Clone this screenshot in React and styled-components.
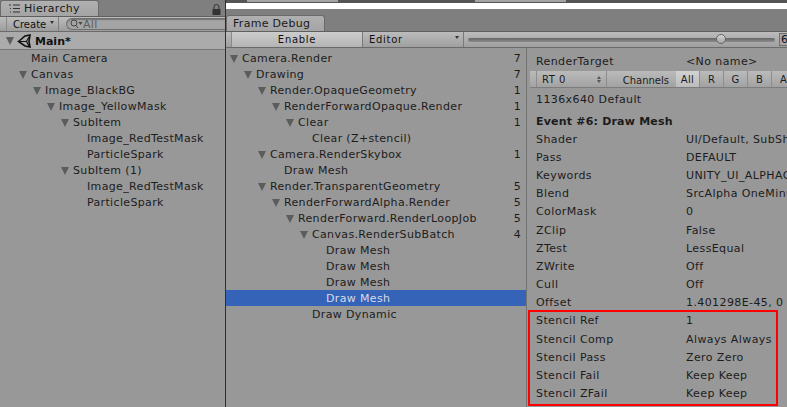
import React from "react";
import styled, { createGlobalStyle, css } from "styled-components";

const Global = createGlobalStyle`
  html, body { margin: 0; padding: 0; width: 787px; height: 407px; overflow: hidden; background: #989898; }
  * { box-sizing: border-box; }
`;
const Page = styled.div`
  width: 787px; height: 407px; display: flex; overflow: hidden; position: relative;
  font-family: "DejaVu Sans", sans-serif; font-size: 11px; color: #111; background: #989898;
`;
const Hierarchy = styled.section`
  width: 226px; flex: none; display: flex; flex-direction: column; border-right: 1px solid #2e2e2e;
`;
const TabStrip = styled.div`
  height: 16px; flex: none; background: #7f7f7f; display: flex; align-items: flex-end; justify-content: space-between;
`;
const Tab = styled.div`
  height: 16px; display: flex; align-items: center; gap: 4px; padding-left: ${p => p.$pad}px; width: ${p => p.$w}px;
  background: linear-gradient(#b0b0b0, #a4a4a4); border: 1px solid #6a6a6a; border-bottom: 0; border-radius: 3px 3px 0 0;
  letter-spacing: .3px; font-size: 11px; color: #1a1a1a;
`;
const Toolbar = styled.div`
  height: 16px; flex: none; display: flex; align-items: stretch; background: linear-gradient(#bdbdbd, #9c9c9c);
  border-top: 1px solid #5f5f5f; border-bottom: 1px solid #6a6a6a;
`;
const CreateBtn = styled.div`
  margin-left: 6px; width: 53px; padding: 1px 0 0 6px; display: flex; align-items: center; gap: 4px; font-size: 10px; letter-spacing: 0;
  border-left: 1px solid #8a8a8a; border-right: 1px solid #7d7d7d;
`;
const Caret = styled.span`
  width: 0; height: 0; border-left: 2.5px solid transparent; border-right: 2.5px solid transparent; border-top: 3px solid #333; margin-top: -4px;
`;
const Search = styled.div`
  flex: 1; margin: 1px 0 1px 7px; border: 1px solid #6f6f6f; border-right: 0; border-radius: 7px 0 0 7px; background: #a4a4a4;
  display: flex; align-items: center; padding-left: 3px; gap: 0; color: #5c5c5c; font-size: 11px; box-shadow: inset 0 1px 1px #777; letter-spacing: .3px;
`;
const SceneRow = styled.div`
  height: 18px; flex: none; display: flex; align-items: center; padding: 1px 0 0 6px; font-weight: bold; background: #ababab;
  border-bottom: 1px solid #787878; letter-spacing: 0; gap: 3px;
`;
const SceneArrow = styled.span`
  width: 0; height: 0; border-left: 4.5px solid transparent; border-right: 4.5px solid transparent; border-top: 8px solid #5c5c5c;
`;
const List = styled.div`
  flex: 1; padding-top: ${p => p.$top}px; display: flex; flex-direction: column;
`;
const Row = styled.div`
  height: 16px; flex: none; display: flex; align-items: center; white-space: nowrap; letter-spacing: .35px; line-height: 14px;
  padding: 2px 5px 0 ${p => p.$depth * 14 + p.$base}px; color: #1c1c1c;
  ${p => p.$selected && css`background: #3463b8; color: #d6dde9;`}
`;
const Arrow = styled.span`
  width: 14px; flex: none; display: flex; align-items: center; padding-left: 2px;
  &::before { content: ""; width: 0; height: 0; border-left: 4.5px solid transparent; border-right: 4.5px solid transparent; border-top: 8px solid #5c5c5c; ${p => !p.$open && "opacity:0;"} }
`;
const Count = styled.span`
  margin-left: auto;
`;
const LockIcon = styled.svg`
  width: 9px; height: 11px; margin: 0 4px 1px 0;
`;
const Main = styled.section`
  flex: 1; min-width: 0; display: flex; flex-direction: column; position: relative;
`;
const TopEdge = styled.div`
  height: 3px; flex: none; background: #555; display: flex; gap: 137px; padding-left: 21px;
`;
const TopTab = styled.div`
  width: 91px; height: 2px; background: #a4a4a4;
`;
const WhiteStrip = styled.div`
  height: 6px; flex: none; background: #fff;
`;
const DebugTabs = styled.div`
  height: 22px; flex: none; background: #7f7f7f; display: flex; align-items: flex-end;
`;
const DebugBar = styled(Toolbar)`
  height: 17px; background: linear-gradient(#bcbcbc, #9f9f9f); padding-left: 5px;
`;
const EnableBtn = styled.div`
  width: 132px; display: flex; align-items: center; justify-content: center; background: linear-gradient(#cdcdcd, #b4b4b4); font-size: 10px; letter-spacing: .7px;
  border-left: 1px solid #8a8a8a; border-right: 1px solid #7a7a7a;
`;
const EditorBtn = styled.div`
  width: 101px; padding: 0 4px 0 6px; display: flex; align-items: center; justify-content: space-between; font-size: 10px; letter-spacing: .7px;
  border-right: 1px solid #7a7a7a;
`;
const SliderWrap = styled.div`
  flex: 1; position: relative; display: flex; align-items: center; padding: 0 4px 0 4px;
`;
const Track = styled.div`
  flex: 1; height: 4px; border-radius: 2px; background: linear-gradient(#666, #8b8b8b);
`;
const Thumb = styled.div`
  position: absolute; right: 53px; top: 2px; width: 10px; height: 10px; border-radius: 50%; border: 1px solid #666; background: linear-gradient(#d5d5d5, #a5a5a5);
`;
const FrameField = styled.div`
  width: 8px; flex: none; background: #a8a8a8; border: 1px solid #6f6f6f; border-right: 0; font-size: 11px; overflow: hidden; margin: 1px 0; line-height: 12px; padding-left: 1px;
`;
const Split = styled.div`
  flex: 1; min-height: 0; display: flex; background: #989898;
`;
const TreePane = styled.div`
  width: 301px; flex: none; border-right: 1px solid #737373; display: flex; flex-direction: column;
`;
const Details = styled.div`
  flex: 1; min-width: 0; display: flex; flex-direction: column; position: relative; overflow: hidden; white-space: nowrap; letter-spacing: .4px; color: #1c1c1c;
`;
const TargetRow = styled.div`
  display: grid; grid-template-columns: 150px 1fr; padding: 6px 0 0 9px; height: 24px; line-height: 16px;
`;
const RtBar = styled.div`
  height: 17px; margin: -1px 0 0 3px; display: flex; align-items: stretch; background: linear-gradient(#bbb, #a2a2a2); border-bottom: 1px solid #7c7c7c; font-size: 10px;
`;
const RtSelect = styled.div`
  flex: none; margin-left: 6px; width: 71px; display: flex; align-items: center; justify-content: space-between; padding: 0 5px; border-left: 1px solid #8d8d8d; border-right: 1px solid #8d8d8d; letter-spacing: .5px;
`;
const Stepper = styled.span`
  display: flex; flex-direction: column; gap: 1px;
  &::before, &::after { content: ""; width: 0; height: 0; border-left: 2px solid transparent; border-right: 2px solid transparent; }
  &::before { border-bottom: 3px solid #555; }
  &::after { border-top: 3px solid #555; }
`;
const ChannelsLabel = styled.div`
  flex: none; width: 69px; text-align: right; padding-right: 7px; line-height: 19px; letter-spacing: 0;
`;
const Chan = styled.div`
  width: 24px; flex: none; display: flex; align-items: center; justify-content: center; border-right: 1px solid #8d8d8d; font-size: 10px; letter-spacing: .3px;
  ${p => p.$on && css`background: linear-gradient(#d2d2d2, #bcbcbc);`}
`;
const Info = styled.div`
  padding: 4px 0 0 9px; line-height: 16px; height: 24px;
`;
const EventTitle = styled.div`
  padding-left: 9px; font-weight: bold; line-height: 16px; margin-top: 2px; height: 20px; letter-spacing: .2px;
`;
const PropGrid = styled.div`
  display: grid; grid-template-columns: 150px 1fr; grid-auto-rows: 18.2px; padding-left: 9px; align-items: center; margin-top: -4px;
`;
const StencilBox = styled.div`
  position: absolute; left: 1px; top: 262px; width: 250px; height: 96px; border: 2px solid #f00; pointer-events: none;
`;

const hier = [
  ["Main Camera", 1, false], ["Canvas", 1, true], ["Image_BlackBG", 2, true], ["Image_YellowMask", 3, true],
  ["SubItem", 4, true], ["Image_RedTestMask", 5, false], ["ParticleSpark", 5, false],
  ["SubItem (1)", 4, true], ["Image_RedTestMask", 5, false], ["ParticleSpark", 5, false],
];
const tree = [
  ["Camera.Render", 0, true, 7], ["Drawing", 1, true, 7], ["Render.OpaqueGeometry", 2, true, 1],
  ["RenderForwardOpaque.Render", 3, true, 1], ["Clear", 4, true, 1], ["Clear (Z+stencil)", 5, false],
  ["Camera.RenderSkybox", 2, true, 1], ["Draw Mesh", 3, false], ["Render.TransparentGeometry", 2, true, 5],
  ["RenderForwardAlpha.Render", 3, true, 5], ["RenderForward.RenderLoopJob", 4, true, 5],
  ["Canvas.RenderSubBatch", 5, true, 4], ["Draw Mesh", 6, false], ["Draw Mesh", 6, false], ["Draw Mesh", 6, false],
  ["Draw Mesh", 6, false, undefined, true], ["Draw Dynamic", 5, false],
];
const props = [
  ["Shader", "UI/Default, SubShader #0"], ["Pass", "DEFAULT"], ["Keywords", "UNITY_UI_ALPHACLIP"],
  ["Blend", "SrcAlpha OneMinusSrcAlpha"], ["ColorMask", "0"], ["ZClip", "False"], ["ZTest", "LessEqual"],
  ["ZWrite", "Off"], ["Cull", "Off"], ["Offset", "1.401298E-45, 0"], ["Stencil Ref", "1"],
  ["Stencil Comp", "Always Always"], ["Stencil Pass", "Zero Zero"], ["Stencil Fail", "Keep Keep"], ["Stencil ZFail", "Keep Keep"],
];

const UnityLogo = () => (
  <svg width="15" height="15" viewBox="0 0 15 15" fill="none" stroke="#111" strokeWidth="1.6" strokeLinejoin="miter">
    <path d="M1.5 7.5 8 2l5-1-1 6.5 1 5.5-5-1z" />
    <path d="M3 7.5h6.5L12 3M9.5 7.5 12 12" strokeWidth="1.2" />
  </svg>
);
const ListIcon = () => (
  <svg width="11" height="9" viewBox="0 0 11 9" stroke="#333" fill="none">
    <path d="M0 1h2M4 1h7M1 4.5h1M4 4.5h7M1 8h1M4 8h7" />
  </svg>
);
const SearchIcon = () => (
  <svg width="13" height="10" viewBox="0 0 13 10" fill="none" stroke="#444">
    <circle cx="4" cy="4" r="3" />
    <path d="M6 6.5 8 9" />
    <path d="M8.5 3h4l-2 3z" fill="#444" stroke="none" />
  </svg>
);

export default function App() {
  return (
    <Page>
      <Global />
      <Hierarchy>
        <TabStrip>
          <Tab $w={99} $pad={8}><ListIcon />Hierarchy</Tab>
          <LockIcon viewBox="0 0 9 11"><path d="M2 5V3a2.5 2.5 0 0 1 5 0v2" fill="none" stroke="#333" /><rect x="0.5" y="5" width="8" height="6" fill="#333" /></LockIcon>
        </TabStrip>
        <Toolbar>
          <CreateBtn>Create<Caret /></CreateBtn>
          <Search><SearchIcon />All</Search>
        </Toolbar>
        <SceneRow><SceneArrow /><UnityLogo />Main*</SceneRow>
        <List $top={0}>
          {hier.map(([t, d, o], i) => (
            <Row key={i} $depth={d} $base={3}><Arrow $open={o} />{t}</Row>
          ))}
        </List>
      </Hierarchy>
      <Main>
        <TopEdge><TopTab /><TopTab /></TopEdge>
        <WhiteStrip />
        <DebugTabs><Tab $w={99} $pad={6}>Frame Debug</Tab></DebugTabs>
        <DebugBar>
          <EnableBtn>Enable</EnableBtn>
          <EditorBtn>Editor<Caret /></EditorBtn>
          <SliderWrap><Track /><Thumb /></SliderWrap>
          <FrameField>6</FrameField>
        </DebugBar>
        <Split>
          <TreePane>
            <List $top={2}>
              {tree.map(([t, d, o, c, s], i) => (
                <Row key={i} $depth={d} $base={2} $selected={s}><Arrow $open={o} />{t}{c !== undefined && <Count>{c}</Count>}</Row>
              ))}
            </List>
          </TreePane>
          <Details>
            <TargetRow><span>RenderTarget</span><span>&lt;No name&gt;</span></TargetRow>
            <RtBar>
              <RtSelect>RT 0<Stepper /></RtSelect>
              <ChannelsLabel>Channels</ChannelsLabel>
              <Chan $on>All</Chan><Chan>R</Chan><Chan>G</Chan><Chan>B</Chan><Chan>A</Chan>
            </RtBar>
            <Info>1136x640 Default</Info>
            <EventTitle>Event #6: Draw Mesh</EventTitle>
            <PropGrid>
              {props.map(([k, v]) => (
                <React.Fragment key={k}><span>{k}</span><span>{v}</span></React.Fragment>
              ))}
            </PropGrid>
            <StencilBox />
          </Details>
        </Split>
      </Main>
    </Page>
  );
}
